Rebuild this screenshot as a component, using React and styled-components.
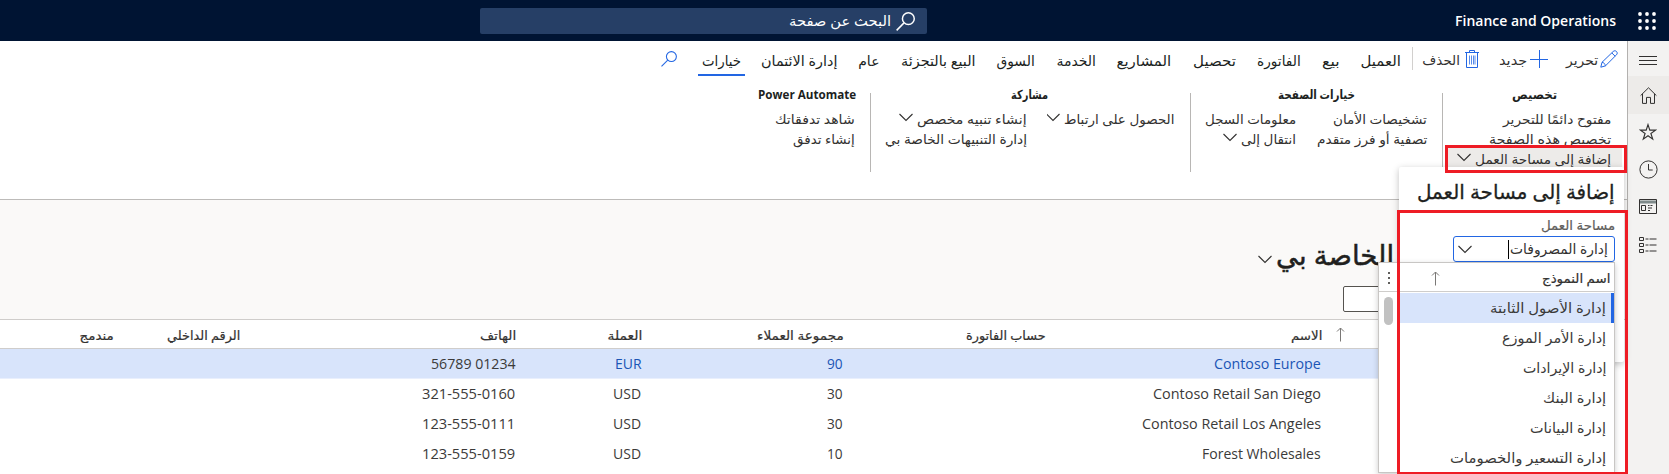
import React, { useLayoutEffect, useRef, useState } from "react";
import styled, { createGlobalStyle, css } from "styled-components";

const FONT = `"Noto Sans", "DejaVu Sans", sans-serif`;
const LATIN = `"Open Sans", "Noto Sans", "DejaVu Sans", sans-serif`;
const BLUE = "#2266e3";

const Global = createGlobalStyle`
  * { box-sizing: border-box; }
  html, body { margin: 0; overflow: hidden; }
  body { font-family: ${FONT}; color: #201f1e; background: #fff; }
  svg { display: block; flex: none; }
`;

/* ---------- fitted text ---------- */
const FitBox = styled.span`
  display: block;
  flex: none;
  width: ${(p) => p.$w}px;
  white-space: nowrap;
  font-family: ${(p) => (p.$latin ? LATIN : FONT)};
`;
const FitInner = styled.span`
  display: inline-block;
  transform-origin: right center;
  unicode-bidi: plaintext;
`;

function Fit({ w, latin, children }) {
  const ref = useRef(null);
  const [scale, setScale] = useState(1);
  useLayoutEffect(() => {
    const natural = ref.current.offsetWidth;
    if (natural) setScale(w / natural);
  }, [w, children]);
  return (
    <FitBox $w={w} $latin={latin}>
      <FitInner ref={ref} style={{ transform: `scaleX(${scale})` }}>{children}</FitInner>
    </FitBox>
  );
}

/* ---------- shell ---------- */
const Screen = styled.div`
  direction: rtl;
  position: relative;
  width: 1669px;
  height: 474px;
  overflow: hidden;
  display: flex;
  flex-direction: column;
`;
const TopBar = styled.header`
  height: 41px;
  flex: none;
  background: #001433;
  color: #fff;
  display: flex;
  align-items: center;
  padding-right: 13px;
`;
const Brand = styled.div`
  margin-right: 22px;
  font-size: 14px;
  font-weight: 600;
  line-height: 20px;
`;
const SearchBox = styled.div`
  width: 447px;
  height: 26px;
  margin: 1px 528px 0 0;
  padding: 0 12px;
  border-radius: 2px;
  background: #263f66;
  display: flex;
  align-items: center;
  gap: 5px;
  font-size: 14px;
  line-height: 22px;
`;
const Body = styled.div`
  flex: 1;
  display: flex;
  min-height: 0;
`;
const Rail = styled.nav`
  width: 42px;
  flex: none;
  background: #f3f2f1;
  border-left: 1px solid #b3b1af;
  display: flex;
  flex-direction: column;
`;
const RailItem = styled.div`
  height: ${(p) => p.$h}px;
  flex: none;
  padding: ${(p) => p.$drop || 0}px 1px 0 0;
  display: flex;
  align-items: center;
  justify-content: center;
  background: ${(p) => (p.$active ? "#edebe9" : "transparent")};
`;
const Main = styled.main`
  flex: 1;
  min-width: 0;
  display: flex;
  flex-direction: column;
`;

/* ---------- action pane ---------- */
const Tabs = styled.div`
  height: 44px;
  flex: none;
  display: flex;
  align-items: flex-start;
  padding: 6px 9px 0 0;
  font-size: 14px;
  line-height: 24px;
`;
const Action = styled.div`
  display: flex;
  align-items: flex-start;
  gap: ${(p) => p.$gap}px;
  margin-left: ${(p) => p.$after}px;
  color: #323130;
  font-size: 13.5px;
  line-height: 27px;
  svg { margin-top: 3px; }
`;
const Divider = styled.i`
  width: 1px;
  height: 23px;
  background: #d2d0ce;
  margin-left: 7px;
`;
const TabList = styled.div`
  display: flex;
  gap: 13px;
`;
const Tab = styled.div`
  padding: 2px 4px 0;
  height: 29px;
  border-bottom: 2px solid ${(p) => (p.$active ? BLUE : "transparent")};
`;
const TabSearch = styled.div`
  margin: 4px 21px 0 0;
`;

const Ribbon = styled.div`
  height: 115px;
  flex: none;
  border-bottom: 1px solid #bdbbb9;
  display: flex;
`;
const Group = styled.section`
  width: ${(p) => p.$w}px;
  flex: none;
  height: 100%;
  ${(p) => !p.$last && css`
    background: linear-gradient(#b8b6b4, #b8b6b4) no-repeat left 8px / 1px 79px;
  `}
`;
const GroupTitle = styled.h3`
  margin: 0;
  padding-right: ${(p) => p.$indent}px;
  height: 18px;
  font-size: 12.5px;
  font-weight: 700;
  line-height: 19px;
`;
const Columns = styled.div`
  display: flex;
  padding-top: 5px;
`;
const Column = styled.div`
  width: ${(p) => p.$w}px;
  flex: none;
`;
const Command = styled.div`
  height: 20px;
  overflow: hidden;
  display: flex;
  gap: 4px;
  margin-left: 4px;
  padding-right: ${(p) => p.$pad}px;
  font-size: 13px;
  line-height: 23px;
  color: #323130;
  ${(p) => p.$open && css`
    height: 22px;
    margin-right: 5px;
    padding-right: ${p.$pad - 5}px;
    background: #edebe9;
  `}
  svg { margin-top: 5px; }
`;

/* ---------- list page ---------- */
const PageHead = styled.div`
  height: 120px;
  flex: none;
  background: #faf9f8;
  border-bottom: 1px solid #cfcdcb;
  padding: 36px 233px 0 0;
`;
const PageTitle = styled.h1`
  margin: 0;
  height: 42px;
  display: flex;
  gap: 4px;
  font-size: 28px;
  font-weight: 500;
  line-height: 37px;
  -webkit-text-stroke: 0.5px #201f1e;
  svg { margin-top: 19px; }
`;
const FilterInput = styled.div`
  width: 51px;
  height: 26px;
  margin-top: 8px;
  background: #fff;
  border: 1px solid #55534f;
  border-radius: 2px;
`;
const Row = styled.div`
  height: ${(p) => (p.$head ? 29 : 30)}px;
  flex: none;
  display: flex;
  align-items: center;
  margin-right: 20px;
  padding: ${(p) => (p.$head ? "2px 0 0" : "0 1px 2px 0")};
  font-size: ${(p) => (p.$head ? 12.5 : 14.5)}px;
  color: ${(p) => (p.$head ? "#323130" : "#3b3a39")};
  ${(p) => p.$head && css`
    border-bottom: 1px solid #cfcdcb;
    -webkit-text-stroke: 0.2px #323130;
  `}
  ${(p) => p.$selected && css`
    background: #d8e4fb;
    border-bottom: 1px solid #e9effd;
    padding-bottom: 1px;
  `}
`;
const StatusCell = styled.div`
  width: 285px;
  flex: none;
  display: flex;
  justify-content: flex-end;
  padding-left: 14px;
  svg { margin-top: -2px; }
`;
const Cell = styled.div`
  width: ${(p) => p.$w}px;
  flex: none;
  color: ${(p) => (p.$link ? "#1b55b5" : "inherit")};
`;

/* ---------- overlays ---------- */
const Flyout = styled.div`
  position: absolute;
  left: 1399px;
  top: 167px;
  width: 225px;
  height: 195px;
  padding: 12px 9px 0 0;
  background: #fff;
  border-radius: 2px;
  box-shadow: 0 2px 7px rgba(0, 0, 0, 0.25);
`;
const FlyTitle = styled.h2`
  margin: 0;
  height: 34px;
  font-size: 20px;
  font-weight: 500;
  line-height: 26px;
  -webkit-text-stroke: 0.3px #201f1e;
`;
const FlyLabel = styled.div`
  height: 23px;
  padding-top: 1px;
  font-size: 13px;
  line-height: 23px;
  color: #605e5c;
  -webkit-text-stroke: 0.2px #605e5c;
`;
const Combo = styled.div`
  width: 162px;
  height: 26px;
  border: 1px solid ${BLUE};
  border-radius: 3px;
  display: flex;
  align-items: center;
  padding: 0 6px 0 4px;
  font-size: 14px;
  line-height: 24px;
  color: #323130;
  svg { margin-right: auto; }
`;
const Caret = styled.i`
  width: 1px;
  height: 19px;
  margin-right: 1px;
  background: #000;
`;
const Menu = styled.div`
  position: absolute;
  left: 1378px;
  top: 262px;
  width: 237px;
  height: 211px;
  overflow: hidden;
  background: #fff;
  border: 1px solid #c8c6c4;
  box-shadow: 0 2px 6px rgba(0, 0, 0, 0.2);
`;
const MenuHead = styled.div`
  height: 29px;
  display: flex;
  align-items: center;
  padding: 2px 4px 0 8px;
  border-bottom: 1px solid #cfcdcb;
  font-size: 13px;
  color: #323130;
  -webkit-text-stroke: 0.2px #323130;
  svg { -webkit-text-stroke: 0; }
  svg:first-of-type { margin-right: auto; }
  svg:last-of-type { margin-right: 40px; }
`;
const MenuBody = styled.div`
  display: flex;
`;
const Options = styled.div`
  flex: 1;
  padding-top: 1px;
`;
const Option = styled.div`
  height: 30px;
  display: flex;
  align-items: center;
  font-size: 14px;
  line-height: 30px;
  color: #3b3a39;
  padding-right: ${(p) => (p.$active ? 5 : 8)}px;
  ${(p) => p.$active && css`
    background: #d8e4fb;
    border-right: 3px solid ${BLUE};
  `}
`;
const Scroll = styled.div`
  width: 21px;
  padding: 5px 7px 0 0;
`;
const Thumb = styled.div`
  width: 9px;
  height: 28px;
  border-radius: 5px;
  background: #c1c1c1;
`;
const Callout = styled.div`
  position: absolute;
  left: ${(p) => p.$x}px;
  top: ${(p) => p.$y}px;
  width: ${(p) => p.$w}px;
  height: ${(p) => p.$h}px;
  border: 3px solid #ee1c25;
`;

/* ---------- icons ---------- */
const Svg = ({ w, h, color = "#323130", sw = 1, children }) => (
  <svg width={w} height={h} viewBox={`0 0 ${w} ${h}`} fill="none" stroke={color} strokeWidth={sw}>
    {children}
  </svg>
);
const Chevron = () => <Svg w={14} h={9} sw={1.1}><path d="M.5 1 7 7.5 13.5 1" /></Svg>;
const SortUp = () => <Svg w={9} h={15} color="#7a7876"><path d="M4.5 14.500V1M1 4.500 4.500 1 8 4.500" /></Svg>;
const Waffle = () => (
  <svg width="18" height="18" viewBox="0 0 18 18" fill="#fff">
    {[2, 9, 16].map((y) => [2, 9, 16].map((x) => <circle key={`${x}-${y}`} cx={x} cy={y} r="1.9" />))}
  </svg>
);
const Glass = ({ s, color, sw }) => (
  <svg width={s} height={s} viewBox="0 0 18 18" fill="none" stroke={color} strokeWidth={sw}>
    <circle cx="11.7" cy="6.3" r="5.6" /><path d="M7.6 10.3.6 17.4" />
  </svg>
);
const Pencil = () => (
  <Svg w={18} h={18} color={BLUE}>
    <path d="M.8 17.2 2 12.3 13.2 1.5c1-1 2.4-.9 3.3 0 .9.9 1 2.3 0 3.3L5.4 15.9zM11.8 2.9l3.3 3.3M2 12.3c1.8.2 3.2 1.6 3.4 3.6" />
  </Svg>
);
const Plus = () => <Svg w={18} h={18} color={BLUE}><path d="M9.500 0v18M0 9.500h18" /></Svg>;
const Trash = () => (
  <Svg w={14} h={18} color={BLUE}>
    <path d="M0 2.5h14M4.5 2.5v-2h5v2M1.5 2.5v15h11v-15" />
    <path d="M4.5 5.5v9M6.5 5.5v9M8.500 5.5v9M10 5.5v9" strokeOpacity=".75" />
  </Svg>
);

const Burger = () => <Svg w={18} h={9}><path d="M0 .5h18M0 4.5h18M0 8.500h18" /></Svg>;
const Home = () => <Svg w={17} h={17}><path d="M.6 8.6 8.5.8l7.9 7.8M2.5 6.8v9.6h4v-6h4v6h4V6.8" /></Svg>;
const Star = () => (
  <Svg w={18} h={18} sw={1.15}>
    <path d="m9 1.600 1.800 5.500h5.800l-4.700 3.400 1.800 5.600L9 12.700l-4.700 3.400 1.800-5.600L1.400 7.100h5.800z" />
  </Svg>
);
const Clock = () => <Svg w={19} h={19}><circle cx="9.5" cy="9.5" r="8.6" /><path d="M9.5 4v6h4.2" /></Svg>;
const Workspace = () => (
  <Svg w={18} h={15}>
    <path d="M.5.5h17v14H.5z" /><path d="M1 3h16" stroke="#7f8a8a" strokeWidth="3" />
    <path d="M2.5 6.500h4v5h-4zM9 6.500h1.500M11.500 6.500h2M9 9h4M9 11.500h2" />
  </Svg>
);
const Tasks = () => (
  <Svg w={18} h={16}>
    <path d="M.5.5h4v3h-4zM.5 6.5h4v3h-4zM.5 12.5h4v3h-4zM6.500 2h3M10.500 2h7M6.500 8h3M10.500 8h7M6.500 14h3M10.500 14h7" />
  </Svg>
);
const Dots = () => (
  <svg width="4" height="12" viewBox="0 0 4 12" fill="#605e5c">
    <path d="M1 0h2v2H1zM1 5h2v2H1zM1 10h2v2H1z" />
  </svg>
);

/* ---------- data ---------- */
const TABS = [
  ["العميل", 40.5], ["بيع", 18], ["الفاتورة", 44], ["تحصيل", 43], ["المشاريع", 54.5], ["الخدمة", 40],
  ["السوق", 38.5], ["البيع بالتجزئة", 75], ["عام", 21], ["إدارة الائتمان", 76], ["خيارات", 39],
];
const GROUPS = [
  { title: "تخصيص", tw: 45, indent: 70, w: 185, cols: [
    { w: 185, pad: 16, items: [["مفتوح دائمًا للتحرير", 108], ["تخصيص هذه الصفحة", 122], ["إضافة إلى مساحة العمل", 136, true, true]] },
  ] },
  { title: "خيارات الصفحة", tw: 77, indent: 87, w: 252, cols: [
    { w: 131, pad: 15, items: [["تشخيصات الأمان", 94], ["تصفية أو فرز متقدم", 110]] },
    { w: 121, pad: 15, items: [["معلومات السجل", 91], ["انتقال إلى", 55, true]] },
  ] },
  { title: "مشاركة", tw: 37, indent: 142, w: 320, cols: [
    { w: 147, pad: 16, items: [["الحصول على ارتباط", 110, true]] },
    { w: 173, pad: 16, items: [["إنشاء تنبيه مخصص", 110, true], ["إدارة التنبيهات الخاصة بي", 142]] },
  ] },
  { title: "Power Automate", tw: 98, indent: 14, w: 200, latin: true, cols: [
    { w: 180, pad: 15, items: [["شاهد تدفقاتك", 80], ["إنشاء تدفق", 62]] },
  ] },
];
const HEADS = [
  ["الاسم", 31, 276], ["حساب الفاتورة", 80, 202], ["مجموعة العملاء", 87, 201.5], ["العملة", 34.5, 126],
  ["الهاتف", 36, 276.5], ["الرقم الداخلي", 73, 126.5], ["مندمج", 34.5, 100],
];
const ROWS = [
  [["Contoso Europe", 107], null, ["90", 16], ["EUR", 27], ["56789 01234", 85]],
  [["Contoso Retail San Diego", 168], null, ["30", 16], ["USD", 28], ["321-555-0160", 93]],
  [["Contoso Retail Los Angeles", 179], null, ["30", 16], ["USD", 28], ["123-555-0111", 93]],
  [["Forest Wholesales", 119], null, ["10", 16], ["USD", 28], ["123-555-0159", 93]],
];
const OPTIONS = [
  ["إدارة الأصول الثابتة", 116], ["إدارة الأمر الموزع", 104], ["إدارة الإيرادات", 83],
  ["إدارة البنك", 63], ["إدارة البيانات", 76], ["إدارة التسعير والخصومات", 156],
];

export default function App() {
  return (
    <Screen>
      <Global />
      <TopBar>
        <Waffle />
        <Brand><Fit w={161} latin>Finance and Operations</Fit></Brand>
        <SearchBox>
          <Glass s={19} color="#fff" sw={1.4} />
          <Fit w={102}>البحث عن صفحة</Fit>
        </SearchBox>
      </TopBar>
      <Body>
        <Rail>
          <RailItem $h={35} $drop={4}><Burger /></RailItem>
          <RailItem $h={38} $active><Home /></RailItem>
          <RailItem $h={36}><Star /></RailItem>
          <RailItem $h={38}><Clock /></RailItem>
          <RailItem $h={36}><Workspace /></RailItem>
          <RailItem $h={40} $drop={1}><Tasks /></RailItem>
        </Rail>
        <Main>
          <Tabs>
            <Action $gap={2} $after={18}><Pencil /><Fit w={32}>تحرير</Fit></Action>
            <Action $gap={3} $after={20}><Plus /><Fit w={28}>جديد</Fit></Action>
            <Action $gap={5} $after={9}><Trash /><Fit w={38}>الحذف</Fit></Action>
            <Divider />
            <TabList>
              {TABS.map(([label, w], i) => (
                <Tab key={label} $active={i === TABS.length - 1}><Fit w={w}>{label}</Fit></Tab>
              ))}
            </TabList>
            <TabSearch><Glass s={16} color={BLUE} sw={1.2} /></TabSearch>
          </Tabs>
          <Ribbon>
            {GROUPS.map((g, gi) => (
              <Group key={g.title} $w={g.w} $last={gi === GROUPS.length - 1}>
                <GroupTitle $indent={g.indent}><Fit w={g.tw} latin={g.latin}>{g.title}</Fit></GroupTitle>
                <Columns>
                  {g.cols.map((c, ci) => (
                    <Column key={ci} $w={c.w}>
                      {c.items.map(([label, w, arrow, open]) => (
                        <Command key={label} $pad={c.pad} $open={open}>
                          <Fit w={w}>{label}</Fit>
                          {arrow && <Chevron />}
                        </Command>
                      ))}
                    </Column>
                  ))}
                </Columns>
              </Group>
            ))}
          </Ribbon>
          <PageHead>
            <PageTitle><Fit w={118}>الخاصة بي</Fit><Chevron /></PageTitle>
            <FilterInput />
          </PageHead>
          <Row $head>
            <StatusCell><SortUp /></StatusCell>
            {HEADS.map(([label, w, col]) => (
              <Cell key={label} $w={col}><Fit w={w}>{label}</Fit></Cell>
            ))}
          </Row>
          {ROWS.map((cells, ri) => (
            <Row key={ri} $selected={ri === 0}>
              <StatusCell />
              {cells.map((c, ci) => (
                <Cell key={ci} $w={HEADS[ci][2]} $link={ri === 0 && ci < 4}>
                  {c && <Fit w={c[1]} latin>{c[0]}</Fit>}
                </Cell>
              ))}
            </Row>
          ))}
        </Main>
      </Body>

      <Flyout>
        <FlyTitle><Fit w={198}>إضافة إلى مساحة العمل</Fit></FlyTitle>
        <FlyLabel><Fit w={74}>مساحة العمل</Fit></FlyLabel>
        <Combo><Fit w={98}>إدارة المصروفات</Fit><Caret /><Chevron /></Combo>
      </Flyout>
      <Menu>
        <MenuHead><Fit w={68}>اسم النموذج</Fit><SortUp /><Dots /></MenuHead>
        <MenuBody>
          <Options>
            {OPTIONS.map(([label, w], i) => (
              <Option key={label} $active={i === 0}><Fit w={w}>{label}</Fit></Option>
            ))}
          </Options>
          <Scroll><Thumb /></Scroll>
        </MenuBody>
      </Menu>
      <Callout $x={1445} $y={145} $w={182} $h={28} />
      <Callout $x={1397} $y={210} $w={231} $h={265} />
    </Screen>
  );
}
